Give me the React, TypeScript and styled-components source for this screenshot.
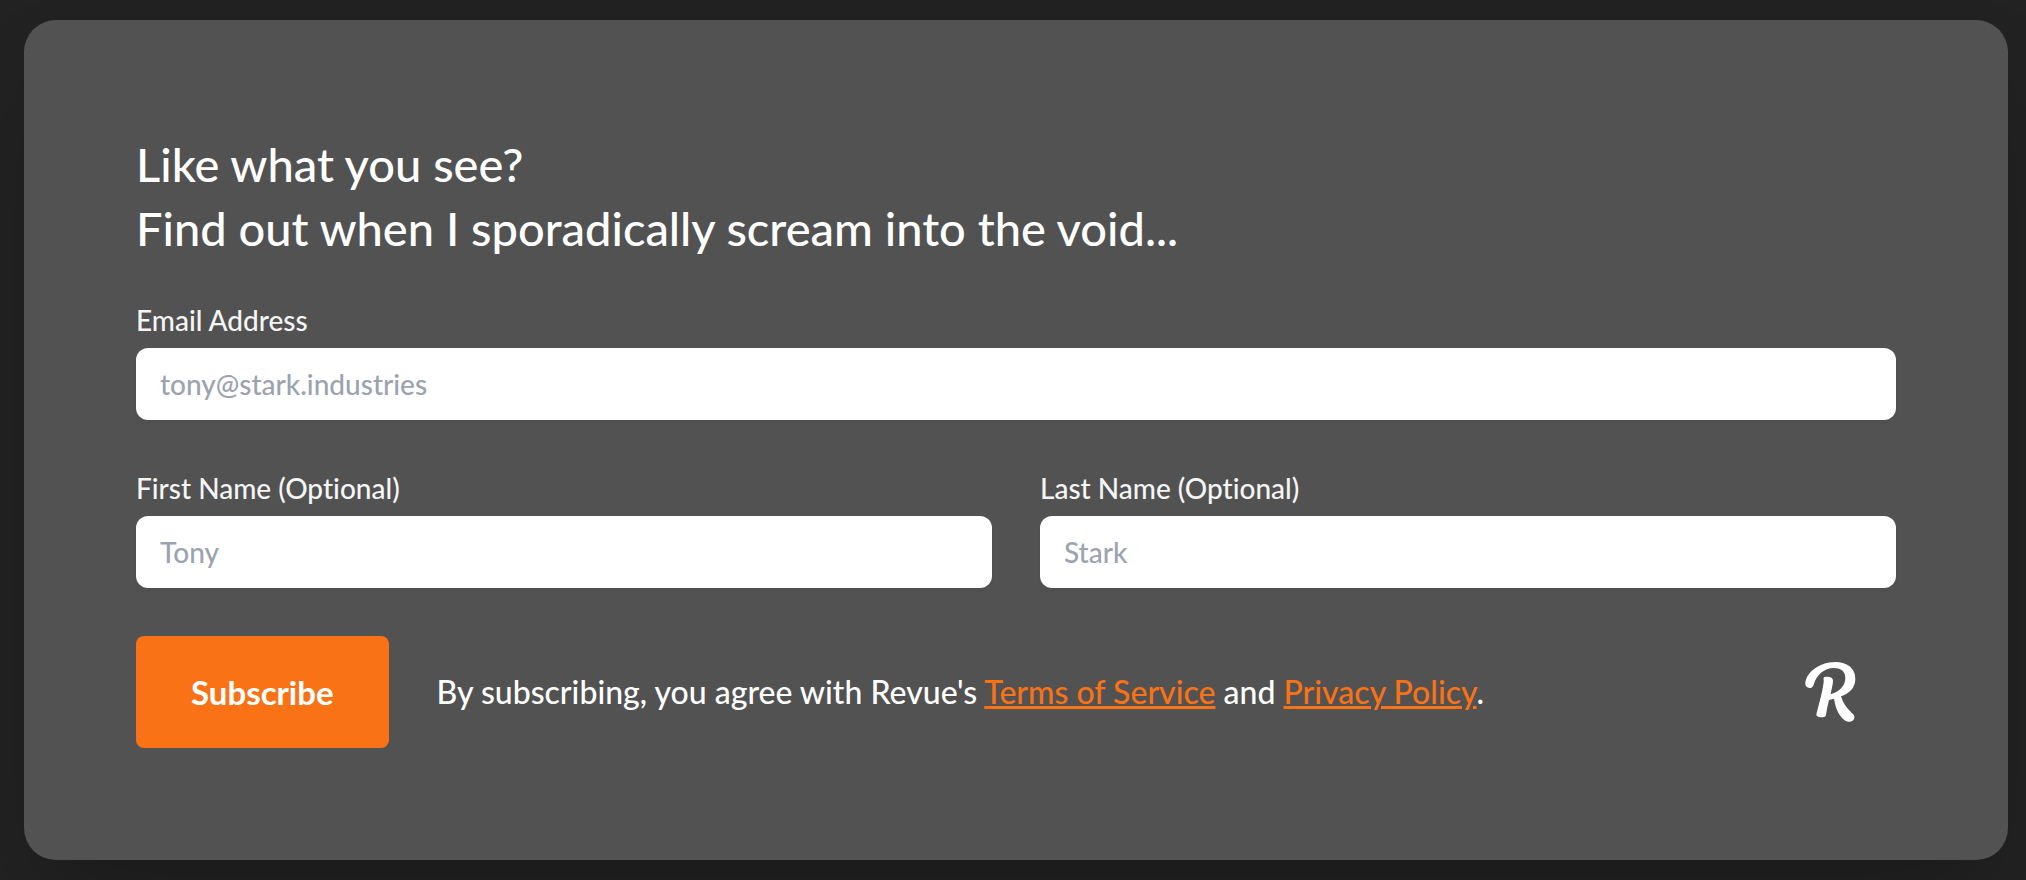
import React from 'react';
import styled, { createGlobalStyle } from 'styled-components';

const GlobalStyle = createGlobalStyle`
  *, *::before, *::after { box-sizing: border-box; }
  body {
    margin: 0;
    background: #222;
    font-family: Lato, "Liberation Sans", sans-serif;
    font-variant-ligatures: none;
    color: #fff;
  }
`;

const Page = styled.main`
  padding: 20px 18px 20px 24px;
  overflow: hidden;
`;

const Card = styled.section`
  padding: 112px;
  border-radius: 32px;
  background: #525252;
  box-shadow: 0 50px 100px -24px rgba(0, 0, 0, 0.25);
`;

const Heading = styled.h2`
  margin: 0 0 40px;
  font-size: 47px;
  line-height: 64px;
  font-weight: 500;
`;

const Form = styled.form`
  display: grid;
  grid-template-columns: 1fr 1fr;
  gap: 48px;
`;

const Field = styled.div<{ $wide?: boolean }>`
  display: flex;
  flex-direction: column;
  gap: 8px;
  grid-column: ${({ $wide }) => ($wide ? '1 / -1' : 'auto')};
`;

const Label = styled.label`
  font-size: 28px;
  line-height: 40px;
  font-weight: 500;
  color: #f5f5f5;
`;

const Input = styled.input`
  width: 100%;
  height: 72px;
  padding: 0 24px;
  border: 0;
  border-radius: 12px;
  background: #fff;
  box-shadow: 0 2px 4px rgba(0, 0, 0, 0.05);
  font: inherit;
  font-size: 28px;
  line-height: 40px;
  font-weight: 500;
  color: #262626;

  &::placeholder {
    color: #9ca3af;
    opacity: 1;
  }
`;

const Footer = styled.div`
  grid-column: 1 / -1;
  display: flex;
  align-items: center;
  gap: 48px;
`;

const Button = styled.button`
  height: 112px;
  padding: 0 55px;
  border: 0;
  border-radius: 8px;
  background: #f97316;
  font: inherit;
  font-size: 33px;
  line-height: 48px;
  font-weight: 700;
  color: #fff;
  cursor: pointer;
`;

const Terms = styled.p`
  flex: 1;
  margin: 0;
  font-size: 32px;
  line-height: 48px;
  font-weight: 500;
`;

const Link = styled.a`
  color: #f97316;
  text-decoration: underline;
`;

const LogoLink = styled.a`
  display: flex;
  margin-right: 40px;
  color: #fff;
`;

const RevueLogo = () => (
  <svg width="51" height="60" viewBox="14 18 153 180" fill="currentColor" aria-hidden="true">
    <path d="M15 84C15 52 55 18 105 18C142 18 165 38 165 68C165 96 146 113 122 121C128 142 140 158 157 173C165 180 163 190 156 195C149 199 140 198 133 193C115 178 106 158 101 128L86 132C82 148 79 164 77 178C75 184 69 184 62 184C54 184 48 182 48 175C57 140 66 110 70 78C71 70 68 68 71 64C76 61 98 61 98 74C98 84 94 98 91 115C114 108 135 92 135 66C135 46 122 36 100 36C72 36 49 56 40 86C37 93 33 97 28 96C20 95 15 91 15 84Z" />
  </svg>
);

export default function App() {
  return (
    <>
      <GlobalStyle />
      <Page>
        <Card>
          <Heading>
            Like what you see?
            <br />
            Find out when I sporadically scream into the void...
          </Heading>
          <Form onSubmit={(event) => event.preventDefault()}>
            <Field $wide>
              <Label htmlFor="email">Email Address</Label>
              <Input id="email" type="email" placeholder="tony@stark.industries" />
            </Field>
            <Field>
              <Label htmlFor="first-name">First Name (Optional)</Label>
              <Input id="first-name" type="text" placeholder="Tony" />
            </Field>
            <Field>
              <Label htmlFor="last-name">Last Name (Optional)</Label>
              <Input id="last-name" type="text" placeholder="Stark" />
            </Field>
            <Footer>
              <Button type="submit">Subscribe</Button>
              <Terms>
                By subscribing, you agree with Revue's <Link href="#terms">Terms of Service</Link> and{' '}
                <Link href="#privacy">Privacy Policy</Link>.
              </Terms>
              <LogoLink href="#revue" aria-label="Revue">
                <RevueLogo />
              </LogoLink>
            </Footer>
          </Form>
        </Card>
      </Page>
    </>
  );
}
